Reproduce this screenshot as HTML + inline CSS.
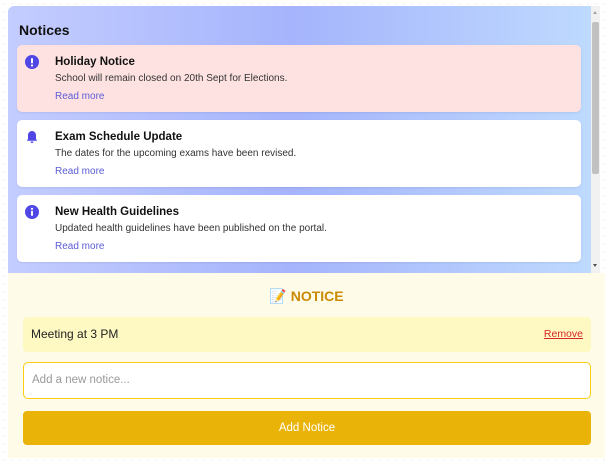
<!DOCTYPE html>
<html><head><meta charset="utf-8"><style>
*{box-sizing:border-box;margin:0;padding:0}
body{width:609px;height:465px;background:#fff;font-family:"Liberation Sans","DejaVu Sans",sans-serif;position:relative;overflow:hidden;
background-image:radial-gradient(#ddd 0.6px,transparent 0.8px);background-size:8px 8px}
.top{position:absolute;left:8px;top:6px;width:592px;height:267px;background:linear-gradient(90deg,#c4cdff 0%,#a5b4fc 48%,#bfdbfe 100%);border-radius:6px 0 0 0;overflow:hidden}
.top h2{position:absolute;left:11px;top:16px;font-size:14px;font-weight:bold;color:#111}
.card{position:absolute;left:9px;width:564px;height:67px;background:#fff;border-radius:5px;box-shadow:0 1px 2px rgba(0,0,0,.08)}
.card.red{background:#fee2e2}
.ic{position:absolute;left:8px;top:10px;width:14px;height:14px}
.t{position:absolute;left:38px;top:11px;font-size:11.5px;font-weight:bold;color:#111}
.d{position:absolute;left:38px;top:28px;font-size:10px;color:#333}
.r{position:absolute;left:38px;top:46px;font-size:10px;color:#5b5bd6}
.sb{position:absolute;left:583px;top:0;width:9px;height:267px;background:#f1f1f1}
.sb i{position:absolute;left:1px;top:16px;width:7px;height:152px;background:#c1c1c1;border-radius:2px}
.sb b{position:absolute;left:2px;width:0;height:0;border-left:2.5px solid transparent;border-right:2.5px solid transparent}
.bot{position:absolute;left:8px;top:273px;width:597px;height:185px;background:#fefce8}
.bot h3{position:absolute;left:0;width:100%;text-align:center;top:15px;font-size:14px;font-weight:bold;color:#ca8a04}
.item{position:absolute;left:15px;top:44px;width:568px;height:35px;background:#fef9c3;border-radius:4px;font-size:12px;color:#222;padding:10px 0 0 8px}
.item a{position:absolute;right:8px;top:11px;font-size:10.5px;color:#dc2626;text-decoration:underline}
.inp{position:absolute;left:15px;top:89px;width:568px;height:37px;background:#fff;border:1.5px solid #facc15;border-radius:5px;font-size:11.5px;color:#999;padding:11px 0 0 8px}
.btn{position:absolute;left:15px;top:138px;width:568px;height:34px;background:#eab308;border-radius:4px;color:#fff;font-size:11.5px;text-align:center;line-height:34px}
</style></head><body>
<div class="top">
<h2>Notices</h2>
<div class="card red" style="top:39px">
<svg class="ic" viewBox="0 0 14 14"><circle cx="7" cy="7" r="7" fill="#4f46e5"/><rect x="6" y="3" width="2" height="5.5" rx="1" fill="#fff"/><circle cx="7" cy="10.5" r="1.1" fill="#fff"/></svg>
<div class="t">Holiday Notice</div><div class="d">School will remain closed on 20th Sept for Elections.</div><div class="r">Read more</div></div>
<div class="card" style="top:114px">
<svg class="ic" viewBox="0 0 14 14"><path d="M7 1C4.5 1 3 3 3 5.5V9L1.8 10.8H12.2L11 9V5.5C11 3 9.5 1 7 1Z" fill="#4f46e5"/><path d="M5.5 11.5a1.5 1.5 0 0 0 3 0z" fill="#4f46e5"/></svg>
<div class="t">Exam Schedule Update</div><div class="d">The dates for the upcoming exams have been revised.</div><div class="r">Read more</div></div>
<div class="card" style="top:189px">
<svg class="ic" viewBox="0 0 14 14"><circle cx="7" cy="7" r="7" fill="#4f46e5"/><circle cx="7" cy="3.8" r="1.1" fill="#fff"/><rect x="6" y="5.8" width="2" height="5" rx=".5" fill="#fff"/></svg>
<div class="t">New Health Guidelines</div><div class="d">Updated health guidelines have been published on the portal.</div><div class="r">Read more</div></div>
<div class="sb"><b style="top:5px;border-bottom:3px solid #a3a3a3"></b><i></i><b style="top:258px;border-top:3px solid #505050"></b></div>
</div>
<div class="bot">
<h3>📝 NOTICE</h3>
<div class="item">Meeting at 3 PM<a>Remove</a></div>
<div class="inp">Add a new notice...</div>
<div class="btn">Add Notice</div>
</div>
</body></html>
